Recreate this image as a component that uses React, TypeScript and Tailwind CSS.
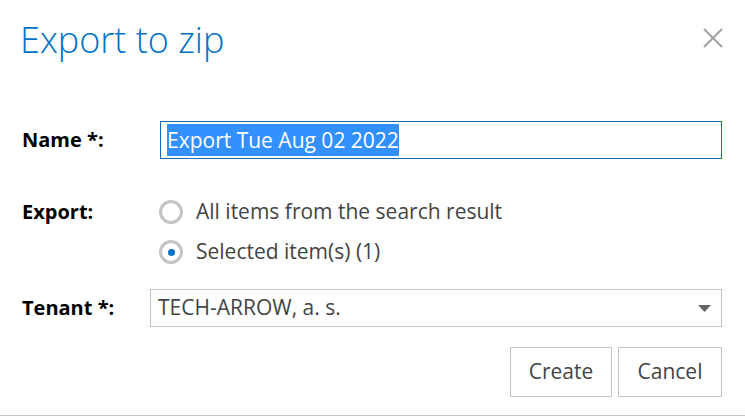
import React from "react";

const Radio = ({ checked, label }: { checked?: boolean; label: string }) => {
  return (
    <div className="flex items-center h-[24px]">
      <span className="w-[24px] h-[24px] rounded-full border-[3px] border-[#c4c4c4] flex items-center justify-center">
        {checked && <span className="w-[7px] h-[7px] rounded-full bg-[#0072c6]"></span>}
      </span>
      <span className="ml-[13px] text-[21px] text-[#444444]">{label}</span>
    </div>
  );
};

const App = () => {
  return (
    <div className="w-[745px] h-[416px] bg-white border-b border-[#c6c6c6] font-['Open_Sans',sans-serif] flex flex-col">
      {/* Header */}
      <div className="flex justify-between items-start pl-[20px] pr-[22px] pt-[16px] h-[121px]">
        <h1 className="text-[36px] font-light text-[#0072c6] leading-[48px]">Export to zip</h1>
        <button className="mt-[12px] w-[20px] h-[20px]">
          <svg width="20" height="20" viewBox="0 0 20 20">
            <line x1="1" y1="1" x2="19" y2="19" stroke="#a0a0a0" strokeWidth="2" />
            <line x1="19" y1="1" x2="1" y2="19" stroke="#a0a0a0" strokeWidth="2" />
          </svg>
        </button>
      </div>

      {/* Name */}
      <div className="flex items-center h-[38px] pl-[22px] pr-[23px]">
        <label className="w-[138px] font-bold text-[20px] text-black">Name *:</label>
        <div className="flex-1 h-[38px] border border-[#1a6ab5] flex items-center px-[6px]">
          <span className="bg-[#3390ff] text-white text-[21px] leading-[32px]">Export Tue Aug 02 2022</span>
        </div>
      </div>

      {/* Export */}
      <div className="flex pl-[22px] mt-[41px]">
        <label className="w-[137px] font-bold text-[20px] text-black leading-[24px]">Export:</label>
        <div className="flex flex-col gap-[16px]">
          <Radio label="All items from the search result" />
          <Radio checked label="Selected item(s) (1)" />
        </div>
      </div>

      {/* Tenant */}
      <div className="flex items-center pl-[22px] pr-[23px] mt-[25px]">
        <label className="w-[128px] font-bold text-[20px] text-black">Tenant *:</label>
        <div className="flex-1 h-[38px] border border-[#c6c6c6] flex items-center justify-between pl-[7px] pr-[10px]">
          <span className="text-[21px] text-[#444444]">TECH-ARROW, a. s.</span>
          <svg width="13" height="7" viewBox="0 0 13 7">
            <polygon points="0,0 13,0 6.5,7" fill="#666666" />
          </svg>
        </div>
      </div>

      {/* Buttons */}
      <div className="flex justify-end gap-[6px] pr-[23px] mt-[20px]">
        <button className="w-[102px] h-[50px] border border-[#c6c6c6] text-[21px] text-[#444444]">Create</button>
        <button className="w-[104px] h-[50px] border border-[#c6c6c6] text-[21px] text-[#444444]">Cancel</button>
      </div>
    </div>
  );
};

export default App;
